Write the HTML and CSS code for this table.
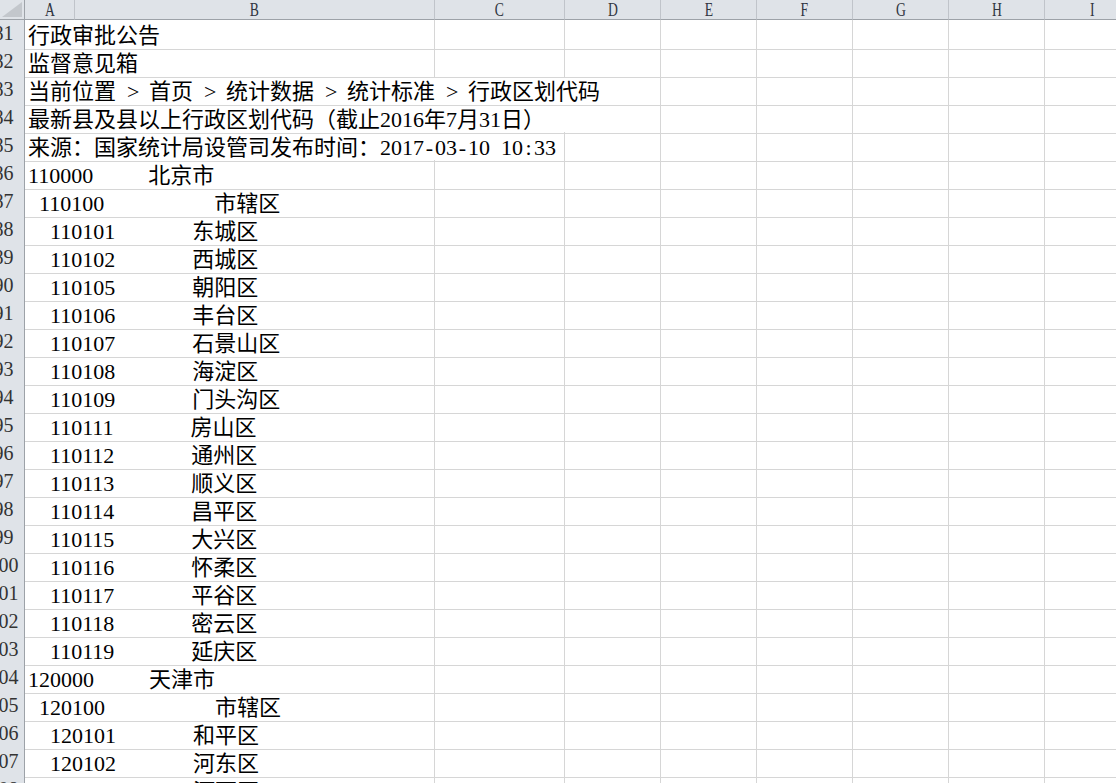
FILE: index.html
```html
<!DOCTYPE html>
<html lang="zh-CN">
<head>
<meta charset="utf-8">
<title>行政区划代码</title>
<link rel="stylesheet" href="styles.css">
</head>
<body>
<div class="sheet">
  <div class="row head">
    <div class="corner"><div class="tri"></div></div>
    <div class="h"><span>A</span></div>
    <div class="h"><span>B</span></div>
    <div class="h"><span>C</span></div>
    <div class="h"><span>D</span></div>
    <div class="h"><span>E</span></div>
    <div class="h"><span>F</span></div>
    <div class="h"><span>G</span></div>
    <div class="h"><span>H</span></div>
    <div class="h"><span>I</span></div>
  </div>

  <div class="row"><div class="rn">81</div><div class="c t s2">行政审批公告</div><div class="c"></div><div class="c"></div><div class="c"></div><div class="c"></div><div class="c"></div><div class="c"></div><div class="c"></div></div>
  <div class="row"><div class="rn">82</div><div class="c t s2">监督意见箱</div><div class="c"></div><div class="c"></div><div class="c"></div><div class="c"></div><div class="c"></div><div class="c"></div><div class="c"></div></div>
  <div class="row"><div class="rn">83</div><div class="c t s4">当前位置 <span class="hw">&gt;</span> 首页 <span class="hw">&gt;</span> 统计数据 <span class="hw">&gt;</span> 统计标准 <span class="hw">&gt;</span> 行政区划代码</div><div class="c"></div><div class="c"></div><div class="c"></div><div class="c"></div><div class="c"></div></div>
  <div class="row"><div class="rn">84</div><div class="c t s4">最新县及县以上行政区划代码（截止2016年7月31日）</div><div class="c"></div><div class="c"></div><div class="c"></div><div class="c"></div><div class="c"></div></div>
  <div class="row"><div class="rn">85</div><div class="c t s3">来源：国家统计局设管司发布时间：2017<span class="hw">-</span>03<span class="hw">-</span>10 10<span class="hw">:</span>33</div><div class="c"></div><div class="c"></div><div class="c"></div><div class="c"></div><div class="c"></div><div class="c"></div></div>
  <div class="row"><div class="rn">86</div><div class="c t s2">110000     北京市</div><div class="c"></div><div class="c"></div><div class="c"></div><div class="c"></div><div class="c"></div><div class="c"></div><div class="c"></div></div>
  <div class="row"><div class="rn">87</div><div class="c t s2"> 110100          市辖区</div><div class="c"></div><div class="c"></div><div class="c"></div><div class="c"></div><div class="c"></div><div class="c"></div><div class="c"></div></div>
  <div class="row"><div class="rn">88</div><div class="c t s2">  110101       东城区</div><div class="c"></div><div class="c"></div><div class="c"></div><div class="c"></div><div class="c"></div><div class="c"></div><div class="c"></div></div>
  <div class="row"><div class="rn">89</div><div class="c t s2">  110102       西城区</div><div class="c"></div><div class="c"></div><div class="c"></div><div class="c"></div><div class="c"></div><div class="c"></div><div class="c"></div></div>
  <div class="row"><div class="rn">90</div><div class="c t s2">  110105       朝阳区</div><div class="c"></div><div class="c"></div><div class="c"></div><div class="c"></div><div class="c"></div><div class="c"></div><div class="c"></div></div>
  <div class="row"><div class="rn">91</div><div class="c t s2">  110106       丰台区</div><div class="c"></div><div class="c"></div><div class="c"></div><div class="c"></div><div class="c"></div><div class="c"></div><div class="c"></div></div>
  <div class="row"><div class="rn">92</div><div class="c t s2">  110107       石景山区</div><div class="c"></div><div class="c"></div><div class="c"></div><div class="c"></div><div class="c"></div><div class="c"></div><div class="c"></div></div>
  <div class="row"><div class="rn">93</div><div class="c t s2">  110108       海淀区</div><div class="c"></div><div class="c"></div><div class="c"></div><div class="c"></div><div class="c"></div><div class="c"></div><div class="c"></div></div>
  <div class="row"><div class="rn">94</div><div class="c t s2">  110109       门头沟区</div><div class="c"></div><div class="c"></div><div class="c"></div><div class="c"></div><div class="c"></div><div class="c"></div><div class="c"></div></div>
  <div class="row"><div class="rn">95</div><div class="c t s2">  110111       房山区</div><div class="c"></div><div class="c"></div><div class="c"></div><div class="c"></div><div class="c"></div><div class="c"></div><div class="c"></div></div>
  <div class="row"><div class="rn">96</div><div class="c t s2">  110112       通州区</div><div class="c"></div><div class="c"></div><div class="c"></div><div class="c"></div><div class="c"></div><div class="c"></div><div class="c"></div></div>
  <div class="row"><div class="rn">97</div><div class="c t s2">  110113       顺义区</div><div class="c"></div><div class="c"></div><div class="c"></div><div class="c"></div><div class="c"></div><div class="c"></div><div class="c"></div></div>
  <div class="row"><div class="rn">98</div><div class="c t s2">  110114       昌平区</div><div class="c"></div><div class="c"></div><div class="c"></div><div class="c"></div><div class="c"></div><div class="c"></div><div class="c"></div></div>
  <div class="row"><div class="rn">99</div><div class="c t s2">  110115       大兴区</div><div class="c"></div><div class="c"></div><div class="c"></div><div class="c"></div><div class="c"></div><div class="c"></div><div class="c"></div></div>
  <div class="row"><div class="rn">100</div><div class="c t s2">  110116       怀柔区</div><div class="c"></div><div class="c"></div><div class="c"></div><div class="c"></div><div class="c"></div><div class="c"></div><div class="c"></div></div>
  <div class="row"><div class="rn">101</div><div class="c t s2">  110117       平谷区</div><div class="c"></div><div class="c"></div><div class="c"></div><div class="c"></div><div class="c"></div><div class="c"></div><div class="c"></div></div>
  <div class="row"><div class="rn">102</div><div class="c t s2">  110118       密云区</div><div class="c"></div><div class="c"></div><div class="c"></div><div class="c"></div><div class="c"></div><div class="c"></div><div class="c"></div></div>
  <div class="row"><div class="rn">103</div><div class="c t s2">  110119       延庆区</div><div class="c"></div><div class="c"></div><div class="c"></div><div class="c"></div><div class="c"></div><div class="c"></div><div class="c"></div></div>
  <div class="row"><div class="rn">104</div><div class="c t s2">120000     天津市</div><div class="c"></div><div class="c"></div><div class="c"></div><div class="c"></div><div class="c"></div><div class="c"></div><div class="c"></div></div>
  <div class="row"><div class="rn">105</div><div class="c t s2"> 120100          市辖区</div><div class="c"></div><div class="c"></div><div class="c"></div><div class="c"></div><div class="c"></div><div class="c"></div><div class="c"></div></div>
  <div class="row"><div class="rn">106</div><div class="c t s2">  120101       和平区</div><div class="c"></div><div class="c"></div><div class="c"></div><div class="c"></div><div class="c"></div><div class="c"></div><div class="c"></div></div>
  <div class="row"><div class="rn">107</div><div class="c t s2">  120102       河东区</div><div class="c"></div><div class="c"></div><div class="c"></div><div class="c"></div><div class="c"></div><div class="c"></div><div class="c"></div></div>
  <div class="row"><div class="rn">108</div><div class="c t s2">  120103       河西区</div><div class="c"></div><div class="c"></div><div class="c"></div><div class="c"></div><div class="c"></div><div class="c"></div><div class="c"></div></div>
</div>
</body>
</html>
```

FILE: styles.css
```css
html, body {
  margin: 0;
  padding: 0;
  background: #ffffff;
}

body {
  width: 1116px;
  height: 783px;
  overflow: hidden;
}

.sheet {
  --cols: 42px 50px 360px 130px 96px 96px 96px 96px 96px 96px;
  margin-left: -17px;
  width: 1160px;
  font-family: "Liberation Serif", "Noto Sans CJK SC", serif;
  color: #000;
}

.row {
  display: grid;
  grid-template-columns: var(--cols);
  height: 28px;
}

.row.head {
  height: 20px;
}

.corner {
  box-sizing: border-box;
  background: #dfe3e8;
  border-right: 1px solid #9da2a8;
  border-bottom: 1px solid #9da2a8;
  display: flex;
  justify-content: flex-end;
  align-items: flex-end;
  padding: 0 2px 2px 0;
}

.tri {
  width: 20px;
  height: 15px;
  background: #c3c7cc;
  clip-path: polygon(100% 0, 100% 100%, 0 100%);
}

.h {
  box-sizing: border-box;
  background: #dfe3e8;
  border-right: 1px solid #c0c4ca;
  border-bottom: 1px solid #9da2a8;
  text-align: center;
  font-size: 19px;
  line-height: 19px;
  color: #2f3540;
  overflow: hidden;
}

.h span {
  display: inline-block;
  transform: scaleX(0.72);
}

.rn {
  box-sizing: border-box;
  background: #dfe3e8;
  border-right: 1px solid #9da2a8;
  border-bottom: 1px solid #c6cacf;
  text-align: center;
  font-size: 20px;
  line-height: 27px;
  color: #333;
  white-space: nowrap;
  overflow: hidden;
}

.c {
  box-sizing: border-box;
  border-right: 1px solid #d6d6d6;
  border-bottom: 1px solid #d6d6d6;
  min-width: 0;
}

.t {
  font-size: 22px;
  line-height: 27px;
  padding: 2px 0 0 3px;
  white-space: pre;
  word-spacing: 5.5px;
  overflow: visible;
}

.s2 { grid-column: span 2; }
.s3 { grid-column: span 3; }
.s4 { grid-column: span 4; }

.hw {
  display: inline-block;
  width: 11px;
  text-align: center;
  word-spacing: 0;
}
```
